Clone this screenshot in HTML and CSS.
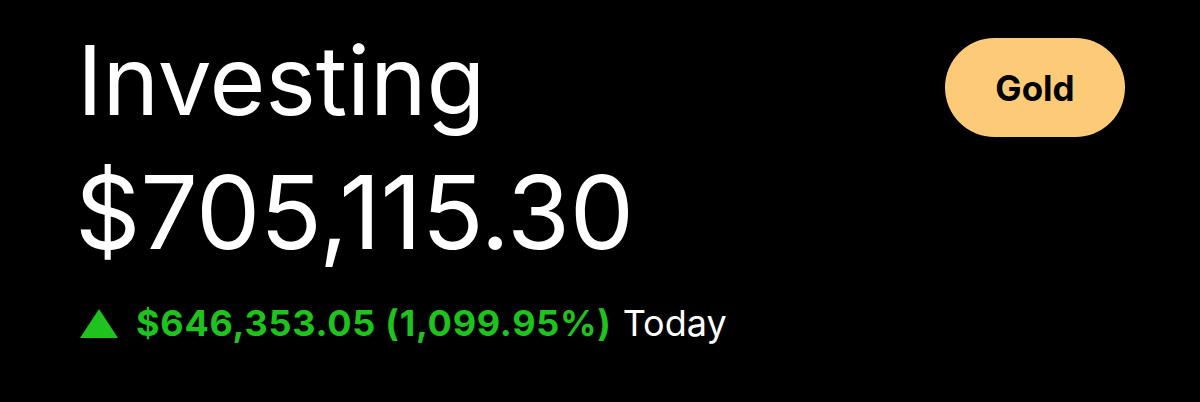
FILE: index.html
```html
<!DOCTYPE html>
<html>
<head>
<meta charset="utf-8">
<link rel="stylesheet" href="styles.css">
</head>
<body>
<div class="page">
  <div class="header">
    <div class="left">
      <h1 class="title">Investing</h1>
      <div class="value">$705,115.30</div>
      <div class="change">
        <svg class="tri" width="38" height="29" viewBox="0 0 38 29"><polygon points="19,0 38,29 0,29" fill="#1ec31e"/></svg>
        <span class="gain">$646,353.05 (1,099.95%)</span>
        <span class="period">Today</span>
      </div>
    </div>
    <div class="badge">Gold</div>
  </div>
</div>
</body>
</html>
```
FILE: styles.css
```css
html, body {
  margin: 0;
  padding: 0;
  background: #000;
}
body {
  width: 1200px;
  height: 402px;
  overflow: hidden;
  font-family: Inter, "Noto Sans", sans-serif;
  color: #fff;
}
.page {
  padding: 32px 75px 0 80px;
}
.header {
  display: flex;
  justify-content: space-between;
  align-items: flex-start;
}
.left {
  display: flex;
  flex-direction: column;
}
.title {
  margin: 0 0 0 -3px;
  font-size: 96px;
  font-weight: 400;
  line-height: 96px;
  letter-spacing: -0.2px;
}
.value {
  margin: 33px 0 0 -5px;
  font-size: 102px;
  font-weight: 400;
  line-height: 102px;
  letter-spacing: -0.3px;
}
.change {
  margin-top: 40px;
  display: flex;
  align-items: center;
  gap: 18px;
  font-size: 36px;
  line-height: 40px;
}
.tri {
  display: block;
}
.gain {
  color: #1ec31e;
  font-weight: 700;
  letter-spacing: 0.75px;
}
.period {
  margin-left: -7px;
  color: #fff;
}
.badge {
  margin-top: 6px;
  width: 180px;
  height: 99px;
  border-radius: 50px;
  background: #fdcb78;
  color: #000;
  font-weight: 700;
  font-size: 35px;
  display: flex;
  align-items: center;
  justify-content: center;
}
```
